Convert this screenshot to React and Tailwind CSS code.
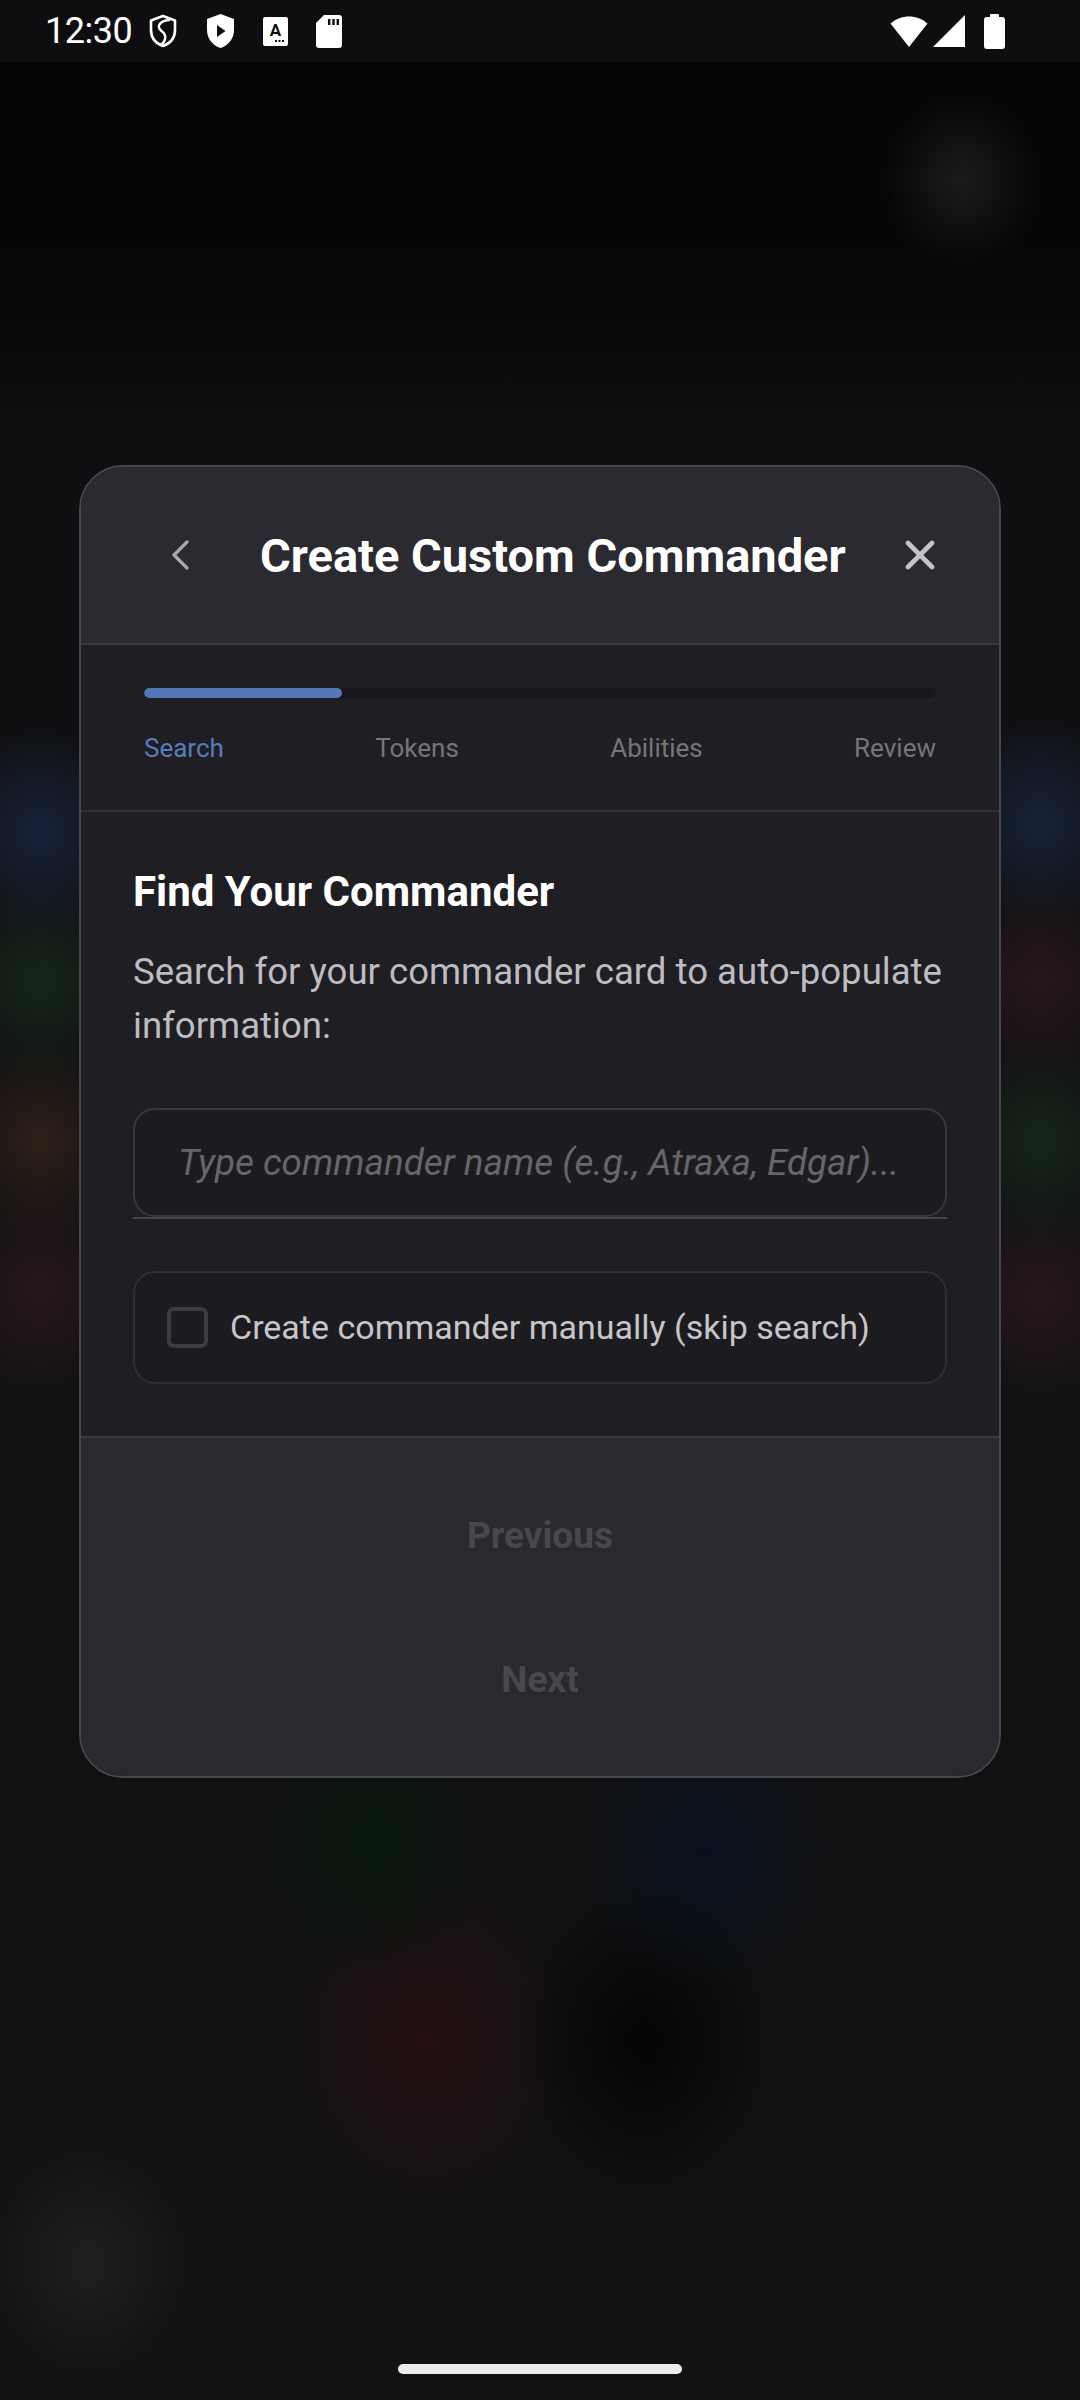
import React from 'react';

const tabs = ['Search', 'Tokens', 'Abilities', 'Review'];

const StatusBar = () => (
    <div className="h-[62px] bg-[#0e0e10] flex items-center pl-[45px] pr-[75px]">
        <span className="text-white text-[36px] leading-none tracking-[-0.5px]">12:30</span>
        <div className="flex items-center ml-[16px] gap-[28px]">
            {/* shield with S */}
            <svg width="30" height="34" viewBox="0 0 30 34">
                <path d="M15 2 L27 6.5 V16 C27 24 22 29.5 15 32 C8 29.5 3 24 3 16 V6.5 Z" fill="none" stroke="#fff" strokeWidth="2.6" strokeLinejoin="round" />
                <path d="M21 6 C11 7 8 13 14 17.5 C19 21 18 27 13 31" fill="none" stroke="#fff" strokeWidth="2.4" strokeLinecap="round" />
            </svg>
            {/* shield play */}
            <svg width="29" height="36" viewBox="0 0 29 36">
                <path d="M14.5 1 L28 6 V17 C28 26 22 32.5 14.5 35 C7 32.5 1 26 1 17 V6 Z" fill="#fff" />
                <path d="M11 12 L19.5 18 L11 24 Z" fill="#0e0e10" />
            </svg>
            {/* A box */}
            <svg width="25" height="29" viewBox="0 0 25 29">
                <rect x="0" y="0" width="25" height="29" rx="2" fill="#fff" />
                <text x="12.5" y="19" textAnchor="middle" fontSize="17" fontWeight="700" fontFamily="Roboto, sans-serif" fill="#0e0e10">A</text>
                <rect x="12" y="23" width="2" height="2" fill="#0e0e10" />
                <rect x="15.5" y="23" width="2" height="2" fill="#0e0e10" />
                <rect x="19" y="23" width="2" height="2" fill="#0e0e10" />
            </svg>
            {/* sd card */}
            <svg width="26" height="33" viewBox="0 0 26 33">
                <path d="M8 0 H23 Q26 0 26 3 V30 Q26 33 23 33 H3 Q0 33 0 30 V8 Z" fill="#fff" />
                <rect x="12" y="4" width="2.4" height="6" fill="#0e0e10" />
                <rect x="16.3" y="4" width="2.4" height="6" fill="#0e0e10" />
                <rect x="20.6" y="4" width="2.4" height="6" fill="#0e0e10" />
            </svg>
        </div>
        <div className="flex items-center ml-auto">
            <svg width="40" height="34" viewBox="0 0 40 34">
                <path d="M20 33 L1.5 9.5 C12 0 28 0 38.5 9.5 Z" fill="#fff" />
            </svg>
            <svg width="34" height="34" viewBox="0 0 34 34" className="ml-[3px]">
                <path d="M1 33 L33 1 V33 Z" fill="#fff" />
            </svg>
            <svg width="21" height="35" viewBox="0 0 21 35" className="ml-[18px]">
                <rect x="6" y="0" width="9" height="5" rx="1" fill="#fff" />
                <rect x="0" y="3" width="21" height="32" rx="3" fill="#fff" />
            </svg>
        </div>
    </div>
);

export default function App() {
    return (
        <div className="w-[1080px] h-[2400px] overflow-hidden flex flex-col font-['Roboto','Liberation_Sans',sans-serif] bg-[radial-gradient(80px_90px_at_962px_180px,#1b1b1b,transparent),radial-gradient(95px_105px_at_40px_832px,#17233a,transparent),radial-gradient(95px_105px_at_40px_980px,#15261a,transparent),radial-gradient(95px_105px_at_40px_1140px,#2e2018,transparent),radial-gradient(95px_105px_at_40px_1290px,#28171b,transparent),radial-gradient(95px_105px_at_1040px_822px,#17233a,transparent),radial-gradient(95px_105px_at_1040px_980px,#28171b,transparent),radial-gradient(95px_105px_at_1040px_1140px,#15261a,transparent),radial-gradient(95px_105px_at_1040px_1295px,#28171b,transparent),radial-gradient(120px_140px_at_372px_1840px,#07170c,transparent),radial-gradient(130px_140px_at_705px_1850px,#08121f,transparent),radial-gradient(140px_170px_at_427px_2040px,#240e11,transparent),radial-gradient(130px_160px_at_645px_2040px,#040404,transparent),radial-gradient(100px_115px_at_88px_2262px,#202020,transparent),linear-gradient(180deg,#050506_62px,#060607_290px,#0f0f11_420px,#111113_1200px,#121212_2400px)]">
            <StatusBar />

            <div className="ml-[79px] mt-[403px] w-[922px] rounded-[44px] border-2 border-[#48474f] overflow-hidden">
                {/* header */}
                <div className="h-[178px] bg-[#2b2a31] flex items-center justify-between pl-[36px] pr-[16px] border-b-2 border-[#3b3a41]">
                    <button className="w-[126px] h-[126px] flex items-center justify-center">
                        <svg width="20" height="30" viewBox="0 0 20 30">
                            <path d="M17 2 L4 15 L17 28" fill="none" stroke="#a9a9af" strokeWidth="3.2" strokeLinecap="round" strokeLinejoin="round" />
                        </svg>
                    </button>
                    <h1 className="flex-1 pl-[17px] text-white text-[47px] font-bold leading-none whitespace-nowrap">
                        Create Custom Commander
                    </h1>
                    <button className="w-[126px] h-[126px] flex items-center justify-center">
                        <svg width="30" height="30" viewBox="0 0 30 30">
                            <path d="M3 3 L27 27 M27 3 L3 27" fill="none" stroke="#c4c4c9" strokeWidth="4.6" strokeLinecap="round" />
                        </svg>
                    </button>
                </div>

                {/* steps */}
                <div className="bg-[#1f1e23] px-[63px] pt-[43px] pb-[46px] border-b-2 border-[#323137]">
                    <div className="h-[10px] rounded-full bg-[#17171a] overflow-hidden">
                        <div className="h-full w-1/4 rounded-full bg-[#5577b5]" />
                    </div>
                    <div className="mt-[35px] flex justify-between text-[26px] leading-[31px]">
                        {tabs.map((t, i) => (
                            <span key={t} className={i === 0 ? 'text-[#5a7bbd]' : 'text-[#76757c]'}>{t}</span>
                        ))}
                    </div>
                </div>

                {/* body */}
                <div className="bg-[#1f1e23] px-[52px] pt-[55px] pb-[52px]">
                    <h2 className="text-white text-[42px] font-bold leading-[50px]">Find Your Commander</h2>
                    <p className="mt-[28px] text-[#bdbcc2] text-[36.6px] leading-[54px]">
                        Search for your commander card to auto&#8209;populate information:
                    </p>

                    <div className="mt-[55px]">
                        <div className="h-[109px] rounded-[22px] border-2 border-[#38373e] bg-[#1c1b20] flex items-center px-[43px]">
                            <span className="italic text-[36.8px] text-[#67666d] whitespace-nowrap">
                                Type commander name (e.g., Atraxa, Edgar)...
                            </span>
                        </div>
                        <div className="h-[2px] bg-[#46454c]" />
                    </div>

                    <label className="mt-[52px] h-[113px] rounded-[22px] border-2 border-[#302f35] bg-[#1c1b20] flex items-center pl-[32px]">
                        <span className="w-[41px] h-[41px] rounded-[7px] border-[4px] border-[#3d3c43]" />
                        <span className="ml-[22px] text-[34px] text-[#c6c5ca] whitespace-nowrap">
                            Create commander manually (skip search)
                        </span>
                    </label>
                </div>

                {/* footer */}
                <div className="bg-[#2a2930] border-t-2 border-[#3b3a41] pt-[40px] pb-[38px] flex flex-col gap-[28px]">
                    <button className="h-[116px] text-[37px] font-bold text-[#48474e]">Previous</button>
                    <button className="h-[116px] text-[37px] font-bold text-[#48474e]">Next</button>
                </div>
            </div>

            <div className="mt-auto mb-[26px] self-center w-[284px] h-[10px] rounded-full bg-[#ececec]" />
        </div>
    );
}
